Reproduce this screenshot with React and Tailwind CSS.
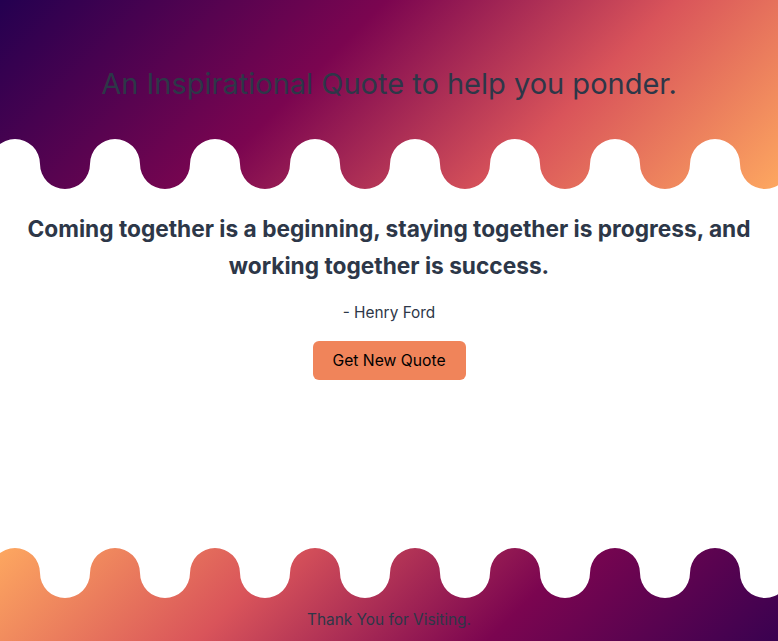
import React from 'react';

const W = 778;

// alternating half circles, r=25, crossings every 50px
function wavePath(fillBelow) {
  let d = '';
  let x = -110;
  d += fillBelow ? `M${x},50 L${x},25 ` : `M${x},0 L${x},25 `;
  let up = true;
  while (x < W + 60) {
    d += `A25,25 0 0 ${up ? 1 : 0} ${x + 50},25 `;
    x += 50;
    up = !up;
  }
  d += fillBelow ? `L${x},50 Z` : `L${x},0 Z`;
  return d;
}

function Wave({ fillBelow, className }) {
  return (
    <svg className={className} width={W} height="50" viewBox={`0 0 ${W} 50`}>
      <path d={wavePath(fillBelow)} fill="#ffffff" />
    </svg>
  );
}

export default function App() {
  return (
    <div className="h-[641px] w-full overflow-hidden flex flex-col bg-white text-[#2d3748] font-['Inter','Noto_Sans',sans-serif]">
      {/* header */}
      <div className="relative h-[189px] shrink-0 bg-[linear-gradient(135deg,#240050_0%,#7b0550_40%,#d9545a_70%,#fda760_100%)]">
        <h1 className="pt-[64px] text-center text-[29px] leading-[40px] font-normal text-[#2d3748]">
          An Inspirational Quote to help you ponder.
        </h1>
        <Wave fillBelow className="absolute bottom-0 left-0" />
      </div>

      {/* quote */}
      <div className="flex-1 flex flex-col items-center px-[20px] pt-[21px]">
        <p className="text-center text-[22.7px] leading-[37px] font-bold text-[#2d3748]">
          Coming together is a beginning, staying together is progress, and working together is success.
        </p>
        <p className="mt-[17px] text-[15.4px] leading-[24px] text-[#2d3748]">- Henry Ford</p>
        <button className="mt-[16px] h-[39px] w-[153px] rounded-md bg-[#f0845a] text-[15.7px] text-black">
          Get New Quote
        </button>
      </div>

      {/* footer */}
      <div className="relative h-[93px] shrink-0 bg-[linear-gradient(315deg,#240050_0%,#7b0550_40%,#d9545a_70%,#fda760_100%)] bg-[length:100%_189px] bg-top bg-no-repeat">
        <Wave fillBelow={false} className="absolute top-0 left-0" />
        <p className="pt-[62px] text-center text-[15.4px] leading-[20px] text-[#2d3748]">
          Thank You for Visiting.
        </p>
      </div>
    </div>
  );
}
